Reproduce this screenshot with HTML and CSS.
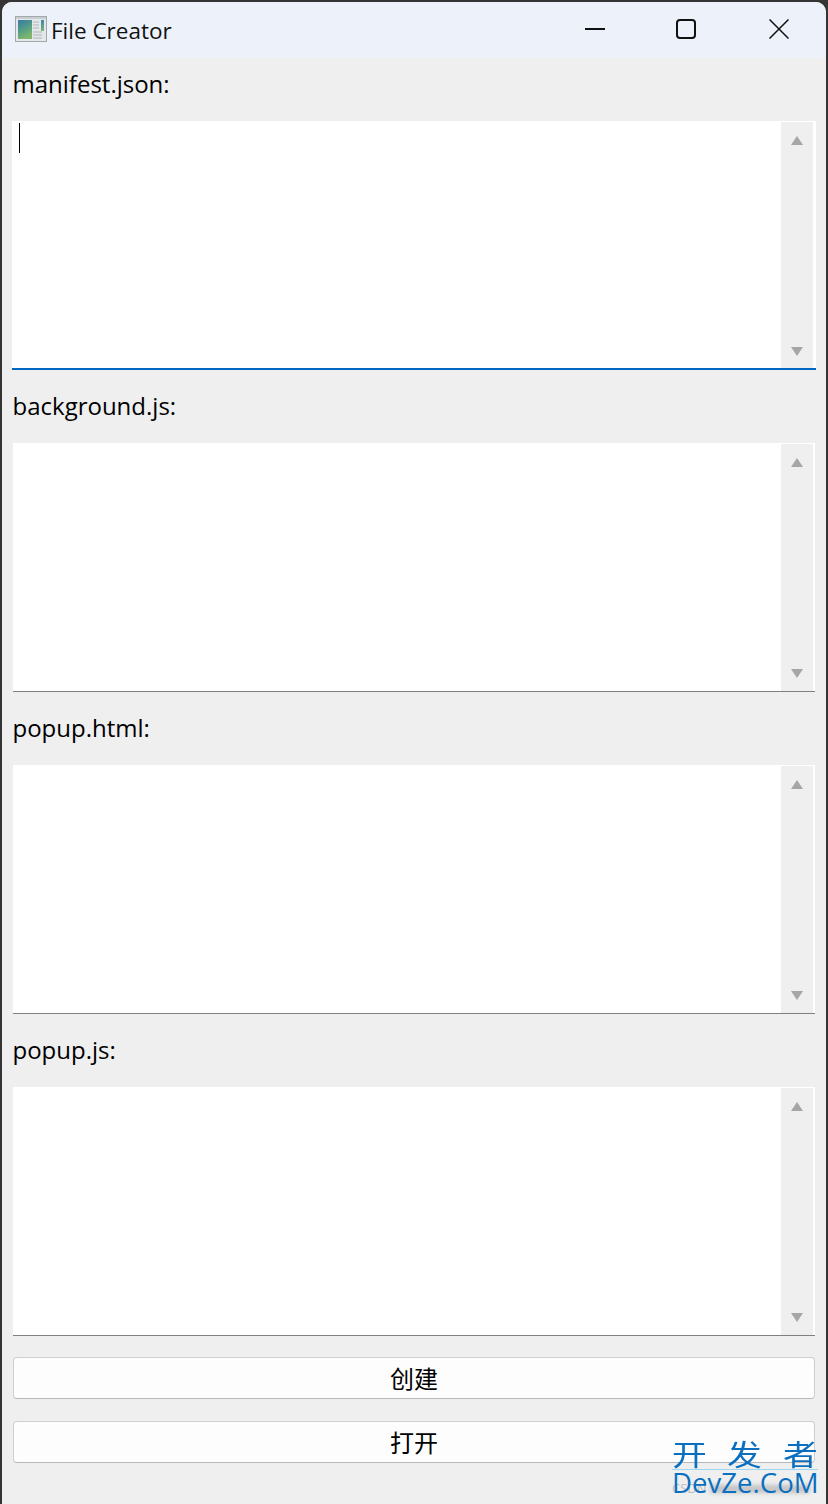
FILE: index.html
```html
<!DOCTYPE html>
<html lang="zh">
<head>
<meta charset="utf-8">
<title>File Creator</title>
<link rel="stylesheet" href="styles.css">
</head>
<body>
<div class="window">
  <header class="titlebar">
    <svg class="app-icon" width="32" height="26" viewBox="0 0 32 26">
      <defs>
        <linearGradient id="pane" x1="0" y1="0" x2="0.4" y2="1">
          <stop offset="0" stop-color="#3f78a8"/>
          <stop offset="0.5" stop-color="#4f9a8a"/>
          <stop offset="1" stop-color="#7fb56c"/>
        </linearGradient>
        <linearGradient id="strip" x1="0" y1="0" x2="0" y2="1">
          <stop offset="0" stop-color="#3f88a8"/>
          <stop offset="1" stop-color="#79b47a"/>
        </linearGradient>
      </defs>
      <rect x="0.5" y="0.5" width="31" height="25" fill="#e4e8ea" stroke="#a2a8ab"/>
      <rect x="1" y="1" width="30" height="2" fill="#c9ced1"/>
      <rect x="3" y="4" width="14" height="19" fill="url(#pane)"/>
      <rect x="26" y="4" width="3" height="11" fill="url(#strip)"/>
      <path d="M18 6h6M18 9h6M18 12h6M18 16h9M18 19h9M18 22h9" stroke="#aeb4b7" stroke-width="1"/>
    </svg>
    <span class="title">File Creator</span>
    <div class="controls">
      <svg class="ctl" width="20" height="20" viewBox="0 0 20 20"><path d="M0 10h20" fill="none" stroke="#111" stroke-width="2"/></svg>
      <svg class="ctl" width="20" height="20" viewBox="0 0 20 20"><rect x="1" y="1" width="18" height="18" rx="3" fill="none" stroke="#111" stroke-width="2"/></svg>
      <svg class="ctl ctl-close" width="20" height="20" viewBox="0 0 20 20"><path d="M0.5 0.5l19 19M19.5 0.5l-19 19" fill="none" stroke="#111" stroke-width="1.5"/></svg>
    </div>
  </header>
  <main class="content">
    <label class="label">manifest.json:</label>
    <div class="field focused">
      <div class="editor"><span class="caret"></span></div>
      <div class="scrollbar"><span class="arrow up"></span><span class="arrow down"></span></div>
    </div>
    <label class="label">background.js:</label>
    <div class="field">
      <div class="editor"></div>
      <div class="scrollbar"><span class="arrow up"></span><span class="arrow down"></span></div>
    </div>
    <label class="label">popup.html:</label>
    <div class="field">
      <div class="editor"></div>
      <div class="scrollbar"><span class="arrow up"></span><span class="arrow down"></span></div>
    </div>
    <label class="label">popup.js:</label>
    <div class="field">
      <div class="editor"></div>
      <div class="scrollbar"><span class="arrow up"></span><span class="arrow down"></span></div>
    </div>
    <div class="actions">
      <button class="btn">创建</button>
      <button class="btn">打开</button>
    </div>
  </main>
</div>
<div class="watermark">
  <div class="wm-cn"><span>开</span><span>发</span><span>者</span></div>
  <div class="wm-en">DevZe.CoM</div>
  <div class="wm-faint"><span>CSDN</span><i class="wm-smear"></i></div>
</div>
</body>
</html>
```

FILE: styles.css
```css
* { box-sizing: border-box; }
html, body { margin: 0; height: 100%; }
body {
  background: #343434;
  padding: 2px 2px 0 2px;
  font-family: "Open Sans", "Noto Sans CJK SC", sans-serif;
  overflow: hidden;
  position: relative;
}
.window {
  height: 1502px;
  display: flex;
  flex-direction: column;
  background: #efefef;
  border-radius: 10px 10px 0 0;
  overflow: hidden;
}
.titlebar {
  height: 56px;
  flex: none;
  display: flex;
  align-items: center;
  background: #edf2fa;
  padding-left: 13px;
}
.app-icon { flex: none; margin-right: 4px; margin-top: -2px; }
.title { font-size: 22.5px; color: #111; }
.controls {
  margin-left: auto;
  display: flex;
  align-items: center;
  gap: 71px;
  padding-right: 37px;
  margin-top: -2px;
}
.ctl-close { margin-left: 2px; }
.content {
  flex: 1;
  padding: 0 11px;
  display: flex;
  flex-direction: column;
}
.label {
  height: 63px;
  display: flex;
  align-items: center;
  font-size: 24px;
  color: #000;
  padding-bottom: 13px;
  margin-left: -0.5px;
}
.field + .label { height: 73px; padding-bottom: 3px; }
.field {
  height: 249px;
  flex: none;
  display: flex;
  background: #fff;
  border-bottom: 1px solid #808080;
  padding: 1px 2px 0 0;
}
.field.focused {
  border-bottom: 2px solid #0067c0;
  margin: 0 -1px;
  padding: 1px 3px 0 1px;
}
.editor { flex: 1; padding: 1px 6px; }
.caret { display: block; width: 1px; height: 30px; background: #000; }
.scrollbar {
  width: 32px;
  background: #efefef;
  display: flex;
  flex-direction: column;
  justify-content: space-between;
  align-items: center;
  padding: 14px 0 13px;
}
.focused .scrollbar { padding-bottom: 12px; }
.arrow {
  width: 0;
  height: 0;
  border-left: 6px solid transparent;
  border-right: 6px solid transparent;
}
.arrow.up { border-bottom: 9px solid #a6a6a6; }
.arrow.down { border-top: 9px solid #a6a6a6; }
.actions {
  display: flex;
  flex-direction: column;
  gap: 22px;
  margin-top: 21px;
}
.btn {
  height: 42px;
  background: #fdfdfd;
  border: 1px solid #cfcfcf;
  border-bottom-color: #b8b8b8;
  border-radius: 4px;
  font: 24px "Noto Sans CJK SC", sans-serif;
  color: #000;
  padding: 0 0 2px;
}
.watermark {
  position: absolute;
  left: 672px;
  top: 1438px;
  width: 146px;
  color: #0b6fc0;
}
.wm-cn {
  display: flex;
  justify-content: space-between;
  padding: 0 3px 0 3px;
  font: 29px/30px "Noto Sans CJK SC", sans-serif;
  border-bottom: 1px solid #9fd8ee;
  height: 32px;
}
.wm-cn span { display: block; transform: scaleX(1.2); }
.wm-en {
  position: relative;
  z-index: 1;
  font: 27.6px/25px "Open Sans", sans-serif;
  white-space: nowrap;
}
.wm-faint {
  display: flex;
  align-items: center;
  gap: 3px;
  margin-top: -13px;
  height: 13px;
  width: 138px;
  font: 13px/13px "Open Sans", sans-serif;
  color: #bdbdbd;
}
.wm-smear {
  flex: 1;
  height: 8px;
  background: #c4c4c4;
  filter: blur(2px);
}
```
